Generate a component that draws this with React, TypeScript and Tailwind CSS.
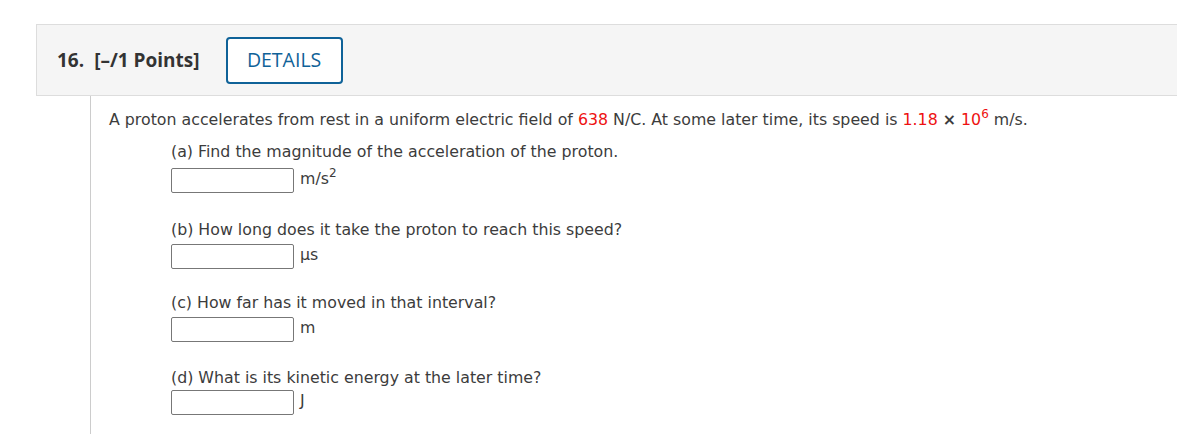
import React from 'react';

const body = { fontFamily: '"DejaVu Sans", Verdana, sans-serif' };
const head = { fontFamily: '"Open Sans", Arial, sans-serif' };

const parts = [
  { label: '(a) Find the magnitude of the acceleration of the proton.', unit: <>m/s<sup className="text-[12px] -top-[7px]">2</sup></>, gap: 'mt-0', inGap: 'mt-[5px]' },
  { label: '(b) How long does it take the proton to reach this speed?', unit: <>μs</>, gap: 'mt-[26px]', inGap: 'mt-[3px]' },
  { label: '(c) How far has it moved in that interval?', unit: <>m</>, gap: 'mt-[23px]', inGap: 'mt-[3px]' },
  { label: '(d) What is its kinetic energy at the later time?', unit: <>J</>, gap: 'mt-[25px]', inGap: 'mt-[1px]' },
];

const App: React.FC = () => {
  return (
    <div className="w-[1177px] h-[434px] bg-white overflow-hidden pt-6">
      {/* Header bar */}
      <div className="ml-9 h-[72px] bg-[#f5f5f5] border border-r-0 border-[#dddddd] flex items-center pl-5" style={head}>
        <span className="text-[19px] font-bold text-[#333333]">16.</span>
        <span className="text-[19px] font-bold text-[#333333] ml-[10px]">[–/1 Points]</span>
        <button className="ml-[26px] w-[117px] h-[47px] border-2 border-[#0f6298] rounded-[4px] text-[#0f6298] text-[19.5px] bg-white">
          DETAILS
        </button>
      </div>

      {/* Body */}
      <div className="ml-[90px] border-l border-[#cccccc] h-[340px] pl-[18px] pt-[13px] text-[15.8px] text-[#3c3c3c]" style={body}>
        <p className="leading-[22px]">
          A proton accelerates from rest in a uniform electric field of <span className="text-[#ee1111]">638</span> N/C. At some later time, its speed is{' '}
          <span className="text-[#ee1111]">1.18</span> <span className="font-bold">×</span>{' '}
          <span className="text-[#ee1111]">10<sup className="text-[12px] -top-[7px]">6</sup></span> m/s.
        </p>
        <div className="ml-[62px] mt-[10px]">
          {parts.map((p, i) => (
            <div key={i} className={p.gap}>
              <div className="leading-[22px]">{p.label}</div>
              <div className={`flex items-start ${p.inGap}`}>
                <input className="w-[123px] h-[25px] border border-[#777777] rounded-[2px] bg-white" />
                <span className="ml-[6px] leading-[22px]">{p.unit}</span>
              </div>
            </div>
          ))}
        </div>
      </div>
    </div>
  );
};

export default App;
